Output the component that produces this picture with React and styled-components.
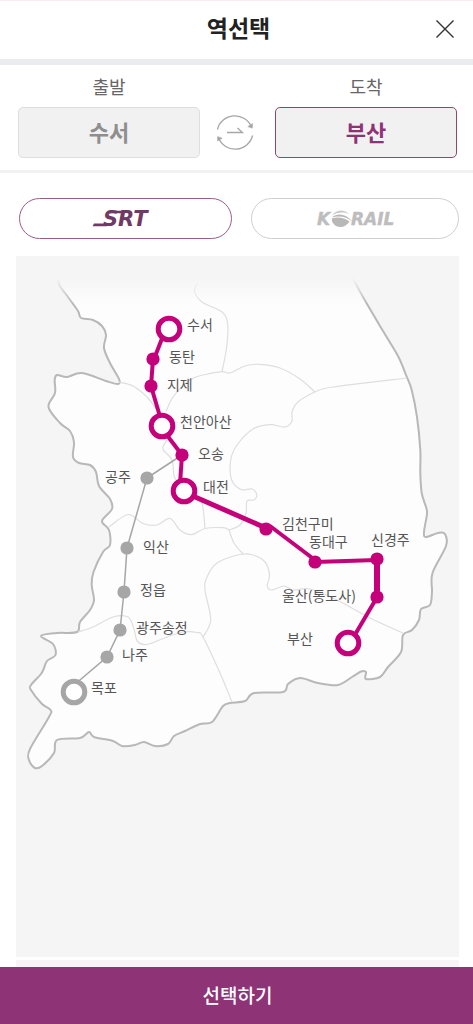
import React, { useState } from 'react';
import styled, { createGlobalStyle, css } from 'styled-components';

const GlobalStyle = createGlobalStyle`
  * { box-sizing: border-box; }
  body { margin: 0; background: #fff; }
  button { font-family: inherit; cursor: pointer; }
`;

const Page = styled.div`
  display: flex;
  flex-direction: column;
  min-height: 100vh;
  background: #fff;
  color: #555;
  font-family: 'Noto Sans CJK KR', 'Noto Sans', sans-serif;
`;

const Header = styled.header`
  display: grid;
  grid-template-columns: 44px 1fr 40px;
  align-items: center;
  height: 65px;
  padding: 0 8px;
  border-top: 1px solid #fbecf0;
  border-bottom: 6px solid #ebecef;
`;

const Title = styled.h1`
  grid-column: 2;
  margin: 0;
  padding-bottom: 6px;
  text-align: center;
  font-size: 23px;
  line-height: 32px;
  font-weight: 700;
  color: #222;
`;

const IconButton = styled.button`
  display: flex;
  align-items: center;
  justify-content: center;
  width: 40px;
  height: 40px;
  padding: 0 0 2px;
  border: 0;
  background: none;
`;

const Route = styled.section`
  display: grid;
  grid-template-columns: 1fr 75px 1fr;
  align-items: end;
  padding: 8px 16px 12px 18px;
  border-bottom: 3px solid #f2f2f2;
`;

const Field = styled.div`
  display: flex;
  flex-direction: column;
  gap: 8px;
`;

const FieldLabel = styled.label`
  text-align: center;
  font-size: 18px;
  line-height: 26px;
  color: #666;
`;

const FieldButton = styled.button`
  height: 51px;
  padding: 0 0 4px;
  border: 1px solid ${(p) => (p.$active ? '#8a4a68' : '#dedede')};
  border-radius: 5px;
  background: #f1f1f1;
  color: ${(p) => (p.$active ? '#8f3276' : '#8e8e8e')};
  font-size: 22px;
  line-height: 32px;
  font-weight: 700;
`;

const SwapCell = styled.div`
  display: flex;
  align-items: center;
  justify-content: center;
  height: 51px;
  padding-right: 6px;
`;

const Operators = styled.div`
  display: grid;
  grid-template-columns: 213fr 208fr;
  gap: 19px;
  padding: 25px 14px 17px 19px;
`;

const OperatorButton = styled.button`
  display: flex;
  align-items: center;
  justify-content: center;
  height: 41px;
  padding: 0;
  border: 1px solid ${(p) => (p.$active ? '#9a5c8a' : '#cfcfcf')};
  border-radius: 21px;
  background: #fff;
`;

const Main = styled.main`
  flex: 1;
  display: flex;
  flex-direction: column;
  margin: 0 14px 0 16px;
  background: #f5f5f5;
`;

const MapCanvas = styled.div`
  position: relative;
  width: 100%;

  svg {
    display: block;
    width: 100%;
    height: auto;
  }
`;

const StationButton = styled.button`
  position: absolute;
  left: ${(p) => p.$left}%;
  top: ${(p) => p.$top}%;
  transform: translateY(-50%);
  padding: 0 0 2px;
  border: 0;
  background: none;
  color: #555;
  font-size: 14px;
  line-height: 20px;
  white-space: nowrap;
  ${(p) =>
    p.$muted &&
    css`
      cursor: default;
    `}
`;

const NextPanel = styled.div`
  height: 7px;
  margin: 3px 14px 0 16px;
  background: #f5f5f5;
`;

const Footer = styled.footer`
  position: sticky;
  bottom: 0;
`;

const SubmitButton = styled.button`
  display: block;
  width: 100%;
  height: 57px;
  padding: 0 0 2px 2px;
  border: 0;
  background: #8e3375;
  color: #fff;
  font-size: 19px;
  line-height: 28px;
  font-weight: 500;
`;

const VIEW = { x: 16, y: 256, w: 443, h: 524 };

const COAST = [
  [59, 272], [59, 284], [68, 297], [78, 311], [81, 318], [93, 320], [102, 326], [106, 335], [104, 348], [110, 363],
  [119, 379], [118, 384], [106, 381], [82, 373], [67, 377], [57, 375], [54.7, 380], [55, 393], [48.5, 407], [60, 423],
  [70, 431], [74, 442], [73, 457], [79, 463], [90, 465], [96, 472], [99, 486], [110, 499], [112, 509], [102, 521],
  [109, 530], [110, 545], [103, 552], [93.5, 572], [91.7, 585], [94, 600], [90, 610], [80, 622], [77, 632], [57, 633],
  [41, 636], [53, 644], [55.5, 655], [47, 661], [41.7, 673], [31, 685], [31, 690], [42, 704], [50.5, 710], [49, 717],
  [30, 749], [29, 760], [35, 768], [42, 766], [54, 753], [57, 740], [80, 738], [89, 732], [94, 737], [113, 741],
  [122, 746], [135, 745], [144, 742], [155, 746], [168, 744], [174, 736], [185, 731], [200, 724], [212, 722],
  [223, 706], [230, 703], [245, 701], [254, 693], [283, 692], [288, 684], [300, 678], [318, 683], [338, 685],
  [352, 677], [361, 671.5], [366, 672], [366, 679], [380, 677], [388, 667], [401, 652], [403, 635], [412, 630],
  [419, 620], [421, 609], [430, 605], [432, 592], [432.5, 573], [446, 546], [445, 534], [438, 533], [426, 537],
  [424, 532], [427, 514], [426, 507], [421.7, 493], [420.3, 473], [420.3, 450], [417, 417], [411.7, 390], [406.7, 376.7],
  [398, 356], [383, 331], [363, 297], [350, 273],
];

const BORDERS = [
  [[198, 283], [194.5, 291], [202, 302], [222, 312], [227.7, 324], [226.7, 347], [222, 371.7]],
  [[119, 382], [133, 386], [147, 397], [157, 410]],
  [[166, 412], [173, 397], [190, 380], [203, 375], [222, 371.7], [230, 373], [245, 366], [260, 364.3], [280, 368], [300, 379], [315, 392]],
  [[407, 378], [333, 387], [315, 392], [298, 402], [292, 412], [292, 421], [285, 427], [270, 424.7], [253, 429], [237, 445],
    [230.7, 460], [231.7, 480], [241, 489.5], [252, 489], [256.7, 495], [254, 500], [247, 501], [246, 513], [240, 525], [229, 530]],
  [[109, 527], [128, 514.5], [143, 523.5], [157, 525], [170, 518.5], [180, 530], [191.7, 534.7], [205, 528.5], [223, 527.7], [229, 530]],
  [[201, 500], [203.3, 510], [205, 528.5]],
  [[229, 530], [234, 543], [243, 554]],
  [[203, 637], [210.7, 620], [205, 590], [207, 577], [217, 563], [240, 554.5], [253, 555], [265, 562], [269.5, 575],
    [267.3, 586], [271.7, 590], [284, 586], [293, 590], [310, 589], [337, 600], [370, 618], [403, 633]],
  [[78, 632], [93, 627], [113, 617], [128, 617], [134, 629], [137.3, 641], [147, 644.5], [167, 637], [183, 632], [197, 632.5],
    [203, 637], [220, 673], [232, 702]],
  [[167, 440], [163, 449], [172, 460], [174, 476], [178, 482]],
];

// Catmull-Rom spline through the given points, as cubic segments.
function smooth(points) {
  const at = (i) => points[Math.max(0, Math.min(points.length - 1, i))];
  let d = `M${points[0][0]} ${points[0][1]}`;
  for (let i = 0; i < points.length - 1; i += 1) {
    const [a, b, c, e] = [at(i - 1), at(i), at(i + 1), at(i + 2)];
    d += `C${b[0] + (c[0] - a[0]) / 6} ${b[1] + (c[1] - a[1]) / 6} ${c[0] - (e[0] - b[0]) / 6} ${c[1] - (e[1] - b[1]) / 6} ${c[0]} ${c[1]}`;
  }
  return d;
}

const STATIONS = [
  { name: '수서', at: [169, 329], label: [187, 325], major: true },
  { name: '동탄', at: [153, 359], label: [169, 357] },
  { name: '지제', at: [151, 386], label: [167, 385] },
  { name: '천안아산', at: [162, 426], label: [180, 422], major: true },
  { name: '오송', at: [182, 455], label: [198, 454] },
  { name: '대전', at: [184, 491], label: [203, 487], major: true },
  { name: '김천구미', at: [266, 529], label: [282, 524] },
  { name: '동대구', at: [315, 562], label: [309, 542] },
  { name: '신경주', at: [377, 559], label: [371, 540] },
  { name: '울산(통도사)', at: [377, 597], label: [282, 596] },
  { name: '부산', at: [348, 643], label: [287, 639], major: true },
  { name: '공주', at: [147, 478], label: [105, 477], muted: true },
  { name: '익산', at: [127, 548], label: [143, 547], muted: true },
  { name: '정읍', at: [124, 592], label: [140, 590], muted: true },
  { name: '광주송정', at: [120, 630], label: [136, 628], muted: true },
  { name: '나주', at: [107, 657], label: [122, 655], muted: true },
  { name: '목포', at: [74, 692], label: [91, 688], muted: true, major: true },
];

const MAIN_LINE = [
  [163, 336, 154, 359, 4],
  [153, 359, 151, 386, 4],
  [151, 386, 161, 420, 4],
  [163, 430, 182, 455, 4],
  [182, 455, 180, 484, 4],
  [186, 493, 266, 528, 5],
  [270, 526, 315, 560, 4],
  [315, 562, 377, 560, 4],
  [377, 559, 377, 597, 6],
  [376, 599, 353, 638, 4],
];

function CloseIcon() {
  return (
    <svg width="20" height="20" viewBox="0 0 20 20" fill="none" stroke="#333" strokeWidth="1.4" aria-hidden="true">
      <path d="M1.5 1.5 18.5 18.5M18.5 1.5 1.5 18.5" />
    </svg>
  );
}

function SwapIcon() {
  return (
    <svg width="40" height="40" viewBox="0 0 40 40" fill="none" stroke="#a6a6a6" strokeWidth="1.3" aria-hidden="true">
      <path d="M2.4 17.5A18 18 0 0 1 36.5 15" />
      <path d="M37.6 23.5A18 18 0 0 1 3.5 26" />
      <path d="M37.6 11.5 37.3 16.2 32.8 14.6Z" fill="#a6a6a6" strokeWidth=".5" />
      <path d="M2.5 29 2.6 24.6 7.2 26.2Z" fill="#a6a6a6" strokeWidth=".5" />
      <path d="M12 20.5H27.5L22.5 16" />
    </svg>
  );
}

const LogoSvg = styled.svg`
  display: block;
  overflow: visible;
`;

const SrtMark = styled(LogoSvg)`
  margin-right: 8px;
`;

function SrtLogo() {
  return (
    <SrtMark width="64" height="32" viewBox="0 0 64 32" role="img" aria-label="SRT">
      <text x="13" y="23" fill="#6f3a66" fontFamily="'DejaVu Sans', sans-serif" fontSize="21" fontWeight="700" fontStyle="italic">SRT</text>
      <path d="M4 20.6H19L17 23.3H2.6Z" fill="#6f3a66" />
      <path d="M20 7.7H36L35 10.2H18Z" fill="#6f3a66" />
    </SrtMark>
  );
}

function KorailLogo() {
  return (
    <LogoSvg width="80" height="32" viewBox="0 0 80 32" role="img" aria-label="KORAIL">
      <g fill="#bdbdbd" stroke="#bdbdbd" strokeWidth=".4" fontFamily="'DejaVu Sans', sans-serif" fontSize="17" fontWeight="700" fontStyle="italic">
        <text x="2" y="22">K</text>
        <text x="36" y="22">RAIL</text>
      </g>
      <path d="M17 12.5C20 7.5 28 4.8 34.5 11.5C29 8.3 22 9.2 17 12.5Z" fill="#c9c9c9" />
      <path d="M16.8 14.5C23 9.5 31 11 38 19C31 13.3 24 12.3 16.8 14.5Z" fill="#b8b8b8" />
      <path d="M16.8 15.6C23 13.5 29 14.5 34.5 18.5C32.5 22 29 24 25.5 24C20 24 16.5 20 16.8 15.6Z" fill="#b8b8b8" />
    </LogoSvg>
  );
}

function RouteMap({ onPick }) {
  return (
    <MapCanvas>
      <svg viewBox={`${VIEW.x} ${VIEW.y} ${VIEW.w} ${VIEW.h}`} fill="none" aria-hidden="true">
        <defs>
          <linearGradient id="mapFade" x1="0" y1="0" x2="0" y2="1">
            <stop offset="0" stopColor="#f5f5f5" />
            <stop offset="0.35" stopColor="#f5f5f5" />
            <stop offset="1" stopColor="#f5f5f5" stopOpacity="0" />
          </linearGradient>
        </defs>
        <path d={smooth(COAST)} fill="#fdfdfd" stroke="#b8b8b8" strokeWidth="2" />
        {BORDERS.map((line, i) => (
          <path key={i} d={smooth(line)} stroke="#dedede" strokeWidth="1.2" />
        ))}
        <rect x="16" y="264" width="443" height="40" fill="url(#mapFade)" />
        <path d="M182 455 147 478" stroke="#a6a6a6" strokeWidth="1.5" />
        <path d="M147 478 127 548 124 592 120 630 107 657 74 685" stroke="#a6a6a6" strokeWidth="1.5" />
        {MAIN_LINE.map(([x1, y1, x2, y2, width]) => (
          <path key={`${x1}-${y1}`} d={`M${x1} ${y1} ${x2} ${y2}`} stroke="#c4007a" strokeWidth={width} />
        ))}
        {STATIONS.map(({ name, at, major, muted }) => {
          const color = muted ? '#a6a6a6' : '#c4007a';
          return major ? (
            <circle key={name} cx={at[0]} cy={at[1]} r="10.8" fill="#fff" stroke={color} strokeWidth="5" />
          ) : (
            <circle key={name} cx={at[0]} cy={at[1]} r="6.6" fill={color} />
          );
        })}
      </svg>
      {STATIONS.map(({ name, label, muted }) => (
        <StationButton
          key={name}
          type="button"
          $left={((label[0] - VIEW.x) / VIEW.w) * 100}
          $top={((label[1] - VIEW.y) / VIEW.h) * 100}
          $muted={muted}
          onClick={() => !muted && onPick(name)}
        >
          {name}
        </StationButton>
      ))}
    </MapCanvas>
  );
}

export default function App() {
  const [route, setRoute] = useState({ from: '수서', to: '부산' });
  const [active, setActive] = useState('to');
  const [operator, setOperator] = useState('srt');

  return (
    <Page>
      <GlobalStyle />
      <Header>
        <Title>역선택</Title>
        <IconButton type="button" aria-label="닫기">
          <CloseIcon />
        </IconButton>
      </Header>
      <Route>
        <Field>
          <FieldLabel htmlFor="from">출발</FieldLabel>
          <FieldButton id="from" type="button" $active={active === 'from'} onClick={() => setActive('from')}>
            {route.from}
          </FieldButton>
        </Field>
        <SwapCell>
          <IconButton type="button" aria-label="출발 도착 바꾸기" onClick={() => setRoute({ from: route.to, to: route.from })}>
            <SwapIcon />
          </IconButton>
        </SwapCell>
        <Field>
          <FieldLabel htmlFor="to">도착</FieldLabel>
          <FieldButton id="to" type="button" $active={active === 'to'} onClick={() => setActive('to')}>
            {route.to}
          </FieldButton>
        </Field>
      </Route>
      <Operators>
        <OperatorButton type="button" $active={operator === 'srt'} onClick={() => setOperator('srt')}>
          <SrtLogo />
        </OperatorButton>
        <OperatorButton type="button" $active={operator === 'korail'} onClick={() => setOperator('korail')}>
          <KorailLogo />
        </OperatorButton>
      </Operators>
      <Main>
        <RouteMap onPick={(name) => setRoute({ ...route, [active]: name })} />
      </Main>
      <NextPanel />
      <Footer>
        <SubmitButton type="button">선택하기</SubmitButton>
      </Footer>
    </Page>
  );
}
